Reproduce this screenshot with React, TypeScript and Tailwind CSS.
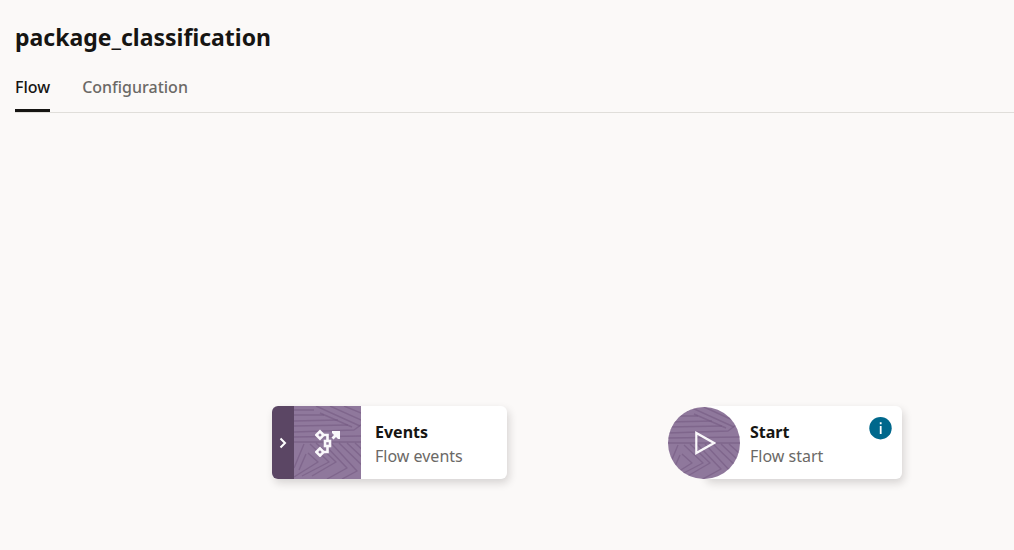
import { useState } from "react";

function Texture({ className }: { className: string }) {
  return (
    <svg
      viewBox="0 0 72 73"
      preserveAspectRatio="xMinYMin slice"
      className={className}
      fill="none"
      stroke="#755a82"
      strokeOpacity="0.6"
      strokeWidth="1.4"
      strokeLinejoin="round"
      aria-hidden="true"
    >
      <rect width="72" height="73" fill="#8f789c" stroke="none" />
      <path d="M0 4L20 4M0 9L30 9M0 15L44 14M0 20L54 19M0 26L60 24L72 15M0 31L72 30M0 36H72" />
      <path d="M22 0L66 20M36 0L69 15M50 0L72 9M26 7L58 21" />
      <path d="M22 37L42 56L18 70M29 37L53 62L33 73M37 37L63 65L48 73M45 37L72 63M53 37L72 55M61 37L72 47" />
      <path d="M16 38L35 56L8 70M0 71L24 56L14 47M0 62L10 38M5 64L12 48" />
    </svg>
  );
}

function EventsIcon() {
  return (
    <svg width="26" height="28" viewBox="0 0 26 28" fill="none" stroke="#faf8fb" strokeWidth="2.6" aria-hidden="true" className="relative">
      <path d="M5 2.4L8.6 6L5 9.6L1.4 6Z" />
      <path d="M5 19.4L8.6 23L5 26.6L1.4 23Z" />
      <path d="M9 6H12.5V11M9 23H12.5V18" />
      <rect x="10" y="12" width="5" height="5" />
      <path d="M17.5 9.5L22 5" strokeWidth="2.8" />
      <path d="M17 2H25V10H23L17 4Z" fill="#faf8fb" stroke="none" />
    </svg>
  );
}

function NodeText({ title, detail }: { title: string; detail: string }) {
  return (
    <div className="flex flex-col pt-3.5 text-base leading-6">
      <h2 className="font-bold text-[#161513]">{title}</h2>
      <p className="text-[#6b6966]">{detail}</p>
    </div>
  );
}

export default function App() {
  const [tab, setTab] = useState("Flow");
  return (
    <div className="flex min-h-screen flex-col bg-[#fbf9f8] font-['Noto_Sans',sans-serif] text-[#161513]">
      <header className="pt-5 pl-[15px]">
        <h1 className="text-[23px] leading-[34px] font-bold">package_classification</h1>
        <div role="tablist" className="mt-3.5 flex gap-8 border-b border-[#e0deda]">
          {["Flow", "Configuration"].map((name) => (
            <button
              key={name}
              type="button"
              role="tab"
              aria-selected={tab === name}
              onClick={() => setTab(name)}
              className={
                "border-b-[3px] pt-[9px] pb-[11px] text-base leading-[21px] font-medium " +
                (tab === name ? "border-[#161513] text-[#161513]" : "border-transparent text-[#6b6966]")
              }
            >
              {name}
            </button>
          ))}
        </div>
      </header>

      <main className="relative grow">
        <section className="absolute top-[293px] left-[272px] flex h-[73px] w-[235px] overflow-hidden rounded-md bg-white shadow-[2px_4px_8px_rgba(22,21,19,0.16)]">
          <button type="button" aria-label="Expand events" className="flex w-[22px] items-center justify-center bg-[#5b4664]">
            <svg width="8" height="12" viewBox="0 0 8 12" fill="none" stroke="white" strokeWidth="2" aria-hidden="true">
              <path d="M1.5 1.5L6 6L1.5 10.5" />
            </svg>
          </button>
          <div className="relative mr-3.5 flex w-[67px] items-center justify-center">
            <Texture className="absolute inset-0 h-full w-full" />
            <EventsIcon />
          </div>
          <NodeText title="Events" detail="Flow events" />
        </section>

        <section className="absolute top-[293px] left-[668px] flex h-[73px] w-[234px]">
          <div className="absolute inset-y-0 right-0 left-9 rounded-md bg-white shadow-[2px_4px_8px_rgba(22,21,19,0.16)]" />
          <div className="relative mt-px mr-2.5 flex size-[72px] items-center justify-center overflow-hidden rounded-full">
            <Texture className="absolute inset-0 h-full w-full" />
            <svg width="24" height="26" viewBox="0 0 24 26" fill="none" stroke="#faf8fb" strokeWidth="2.2" className="relative" aria-hidden="true">
              <path d="M4.3 3V23L22 13Z" />
            </svg>
          </div>
          <div className="relative flex grow justify-between">
            <NodeText title="Start" detail="Flow start" />
            <button type="button" aria-label="Start information" className="mt-[11px] mr-2.5 size-[23px]">
              <svg viewBox="0 0 23 23" aria-hidden="true">
                <circle cx="11.5" cy="11.2" r="11.2" fill="#00688c" />
                <path d="M10.8 5.2h1.8v2h-1.8zM10.8 9h1.8v8h-1.8z" fill="white" />
              </svg>
            </button>
          </div>
        </section>
      </main>
    </div>
  );
}
